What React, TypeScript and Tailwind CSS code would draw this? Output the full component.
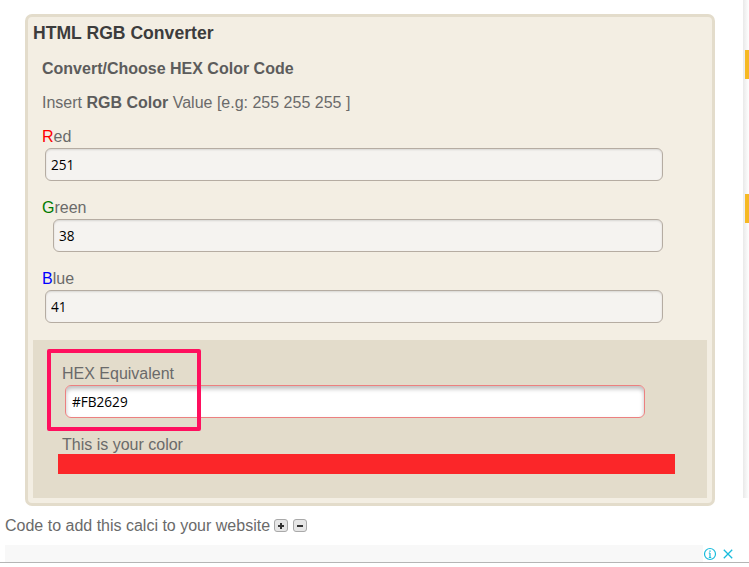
import React from "react";

const Field = ({ letter, rest, color, value, indent }: { letter: string; rest: string; color: string; value: string; indent: string }) => {
  return (
    <div className="h-[71px]">
      <div className="h-[24px] pl-[14px] text-[16px] leading-[26px]">
        <span className={color}>{letter}</span>
        {rest}
      </div>
      <div className={indent}>
        <input
          readOnly
          value={value}
          className="block h-[33px] w-full rounded-[6px] border border-[#b5aca2] bg-[#f5f3f0] px-[5px] font-['Open_Sans',sans-serif] text-[13.6px] text-black shadow-[inset_0_1px_2px_rgba(0,0,0,0.12)] outline-none"
        />
      </div>
    </div>
  );
};

const App = () => {
  return (
    <div className="relative flex h-[567px] w-[749px] overflow-hidden bg-white font-['Liberation_Sans',Arial,sans-serif] text-[#6a6a6a]">
      <div className="w-[743px] shrink-0">
        <div className="ml-[25px] mt-[14px] h-[492px] w-[690px] rounded-[7px] border-[3px] border-[#e3dccb] bg-[#f3eee3] px-[5px]">
          <h1 className="pt-[4px] text-[17.6px] font-bold leading-[24px] text-[#3c3c3c]">HTML RGB Converter</h1>
          <h2 className="mt-[12px] pl-[9px] text-[16px] font-bold leading-[24px] text-[#5c5c5c]">Convert/Choose HEX Color Code</h2>
          <p className="mt-[10px] pl-[9px] text-[16px] leading-[24px]">
            Insert <b className="text-[#5c5c5c]">RGB Color</b> Value [e.g: 255 255 255 ]
          </p>
          <div className="-ml-[5px] mt-[9px] w-[635px]">
            <Field letter="R" rest="ed" color="text-[#ff0000]" value="251" indent="ml-[17px]" />
            <Field letter="G" rest="reen" color="text-[#007a00]" value="38" indent="ml-[25px]" />
            <Field letter="B" rest="lue" color="text-[#0000ff]" value="41" indent="ml-[17px]" />
          </div>
          <div className="relative mt-[3px] h-[158px] w-[674px] bg-[#e3dccb]">
            <div className="pl-[29px] pt-[23px] text-[16px] leading-[22px]">HEX Equivalent</div>
            <input
              readOnly
              value="#FB2629"
              className="ml-[32px] block h-[33px] w-[580px] rounded-[6px] border border-[#ec8080] bg-white px-[6px] font-['Open_Sans',sans-serif] text-[13.6px] text-black shadow-[inset_0_3px_4px_rgba(0,0,0,0.25)] outline-none"
            />
            <div className="mt-[18px] pl-[29px] text-[16px] leading-[18px]">This is your color</div>
            <div className="ml-[25px] h-[20px] w-[617px] bg-[#fb2629]" />
            <div className="absolute left-[14px] top-[9px] h-[82px] w-[154px] rounded-[2px] border-[4px] border-[#ff0f5e]" />
          </div>
        </div>
        <div className="ml-[5px] mt-[9px] flex h-[21px] items-center text-[16px]">
          Code to add this calci to your website
          <span className="ml-[4px] flex h-[13px] w-[14px] items-center justify-center rounded-[3px] border border-[#a9a9a9] bg-[#e6e6e6] text-[#333333]">
            <svg width="8" height="8" viewBox="0 0 8 8"><path d="M1 4h6M4 1v6" stroke="currentColor" strokeWidth="2" /></svg>
          </span>
          <span className="ml-[5px] flex h-[13px] w-[14px] items-center justify-center rounded-[3px] border border-[#a9a9a9] bg-[#e6e6e6] text-[#333333]">
            <svg width="8" height="8" viewBox="0 0 8 8"><path d="M1 4h6" stroke="currentColor" strokeWidth="2" /></svg>
          </span>
        </div>
        <div className="ml-[5px] mt-[9px] flex h-[17px] w-[730px] justify-end bg-[#f8f8f8]">
          <div className="flex h-[17px] w-[32px] items-center justify-between bg-white pr-[2px]">
            <svg width="14" height="14" viewBox="0 0 14 14" fill="none" stroke="#19bcdc">
              <circle cx="7" cy="7" r="5.5" strokeWidth="1.2" />
              <path d="M7 6v4.5M5.8 10.5h2.4M5.8 6H7" strokeWidth="1.2" />
              <path d="M7 3.4v1.4" strokeWidth="1.4" />
            </svg>
            <svg width="10" height="12" viewBox="0 0 10 12" fill="none" stroke="#19bcdc" strokeWidth="1.3">
              <path d="M0.8 1.8l8.4 8.4M9.2 1.8l-8.4 8.4" />
            </svg>
          </div>
        </div>
        <div className="h-px w-[749px] bg-[#b5b5b5]" />
      </div>
      <div className="h-[498px] w-[6px] shrink-0 bg-gradient-to-r from-[#e9e9e9] to-white" />
      <div className="absolute left-[745px] top-[50px] h-[29px] w-[4px] bg-[#f6b924]" />
      <div className="absolute left-[745px] top-[194px] h-[29px] w-[4px] bg-[#f6b924]" />
    </div>
  );
};

export default App;
